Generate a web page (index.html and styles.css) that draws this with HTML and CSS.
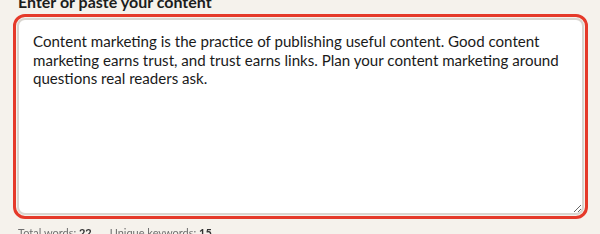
FILE: index.html
```html
<!DOCTYPE html>
<html>
<head>
<meta charset="utf-8">
<link rel="stylesheet" href="styles.css">
</head>
<body>
<div class="field">
  <label class="label" for="content">Enter or paste your content</label>
  <textarea id="content" class="input" autofocus>Content marketing is the practice of publishing useful content. Good content marketing earns trust, and trust earns links. Plan your content marketing around questions real readers ask.</textarea>
  <div class="stats">
    <span class="stat">Total words: <b>22</b></span>
    <span class="stat">Unique keywords: <b>15</b></span>
  </div>
</div>
</body>
</html>
```
FILE: styles.css
```css
html, body {
  margin: 0;
  background: #f5f2ec;
}
body {
  font-family: Lato, "Noto Sans", sans-serif;
  color: #1f1f1f;
}
.field {
  display: flex;
  flex-direction: column;
  padding: 0 16px 0 17px;
  margin-top: -8px;
}
.label {
  font-size: 16px;
  line-height: 20px;
  font-weight: 700;
  margin: 0 0 6px 1px;
  color: #1c1c1c;
}
.input {
  box-sizing: border-box;
  width: 100%;
  height: 197px;
  border: 2px solid #d9d6d0;
  border-radius: 8px;
  background: #fff;
  padding: 12px 14px;
  font-family: Lato, "Noto Sans", sans-serif;
  font-size: 15.1px;
  line-height: 18.6px;
  color: #1a1a1a;
  outline: 3px solid #e53a2a;
  outline-offset: 1px;
  resize: vertical;
  margin: 0;
}
.stats {
  display: flex;
  gap: 18px;
  margin-top: 10px;
  font-size: 11px;
  line-height: 16px;
  color: #6f6f6f;
  padding-left: 1px;
}
.stats b {
  color: #333;
  font-weight: 700;
}
```
